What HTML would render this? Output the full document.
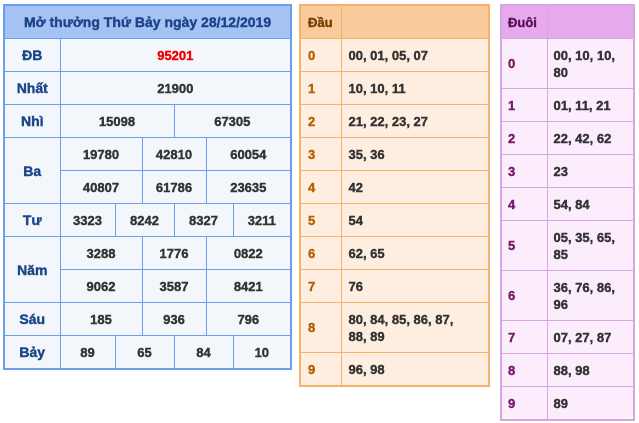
<!DOCTYPE html>
<html><head><meta charset="utf-8"><style>
body{margin:0;background:#fff;font-family:"Liberation Sans",Arial,sans-serif;font-weight:bold;font-size:13px;color:#333;}
table{border-collapse:collapse;table-layout:fixed;position:absolute;font-weight:bold;font-size:13px;}
td{padding:0;font-weight:bold;color:#333;-webkit-text-stroke:0.4px currentColor;}
#L{left:3px;top:4px;width:287px;border:2px solid #6d9eeb;}
#L td{border:1px solid #6d9eeb;background:#f3f6fb;text-align:center;height:32px;}
#L td.h{background:#a4c2f4;color:#1c4587;font-size:14px;}
#L td.l{color:#1c4587;font-size:14px;}
#L td.r{color:#e00;}
#M{left:299px;top:4px;width:191px;border:2px solid #f6b26b;}
#M td{border:1px solid #f6b26b;background:#fdeee0;height:32px;padding-left:7px;line-height:17px;}
#M td.h{background:#f9cb9c;color:#783f04;}
#M td.l{color:#b45f06;}
#R{left:500px;top:4px;width:135px;border:2px solid #d5a6e0;}
#R td{border:1px solid #d5a6e0;background:#fcedfc;height:32px;padding-left:6px;line-height:17px;}
#R td.h{background:#e6a9ec;color:#5b0f5b;}
#R td.l{color:#741b67;}
</style></head><body>
<table id="L">
<colgroup><col style="width:56px"><col style="width:55px"><col style="width:27px"><col style="width:32px"><col style="width:32px"><col style="width:27px"><col style="width:58px"></colgroup>
<tr><td class="h" colspan="7">Mở thưởng Thứ Bảy ngày 28/12/2019</td></tr>
<tr><td class="l">ĐB</td><td colspan="6" class="r">95201</td></tr>
<tr><td class="l">Nhất</td><td colspan="6">21900</td></tr>
<tr><td class="l">Nhì</td><td colspan="3">15098</td><td colspan="3">67305</td></tr>
<tr><td class="l" rowspan="2">Ba</td><td colspan="2">19780</td><td colspan="2">42810</td><td colspan="2">60054</td></tr>
<tr><td colspan="2">40807</td><td colspan="2">61786</td><td colspan="2">23635</td></tr>
<tr><td class="l">Tư</td><td>3323</td><td colspan="2">8242</td><td colspan="2">8327</td><td>3211</td></tr>
<tr><td class="l" rowspan="2">Năm</td><td colspan="2">3288</td><td colspan="2">1776</td><td colspan="2">0822</td></tr>
<tr><td colspan="2">9062</td><td colspan="2">3587</td><td colspan="2">8421</td></tr>
<tr><td class="l">Sáu</td><td colspan="2">185</td><td colspan="2">936</td><td colspan="2">796</td></tr>
<tr><td class="l">Bảy</td><td>89</td><td colspan="2">65</td><td colspan="2">84</td><td>10</td></tr>
</table>
<table id="M">
<colgroup><col style="width:41px"><col></colgroup>
<tr><td class="h">Đầu</td><td class="h"></td></tr>
<tr><td class="l">0</td><td>00, 01, 05, 07</td></tr>
<tr><td class="l">1</td><td>10, 10, 11</td></tr>
<tr><td class="l">2</td><td>21, 22, 23, 27</td></tr>
<tr><td class="l">3</td><td>35, 36</td></tr>
<tr><td class="l">4</td><td>42</td></tr>
<tr><td class="l">5</td><td>54</td></tr>
<tr><td class="l">6</td><td>62, 65</td></tr>
<tr><td class="l">7</td><td>76</td></tr>
<tr><td class="l" style="height:49px">8</td><td>80, 84, 85, 86, 87,<br>88, 89</td></tr>
<tr><td class="l">9</td><td>96, 98</td></tr>
</table>
<table id="R">
<colgroup><col style="width:46px"><col></colgroup>
<tr><td class="h">Đuôi</td><td class="h"></td></tr>
<tr><td class="l" style="height:49px">0</td><td>00, 10, 10,<br>80</td></tr>
<tr><td class="l">1</td><td>01, 11, 21</td></tr>
<tr><td class="l">2</td><td>22, 42, 62</td></tr>
<tr><td class="l">3</td><td>23</td></tr>
<tr><td class="l">4</td><td>54, 84</td></tr>
<tr><td class="l" style="height:49px">5</td><td>05, 35, 65,<br>85</td></tr>
<tr><td class="l" style="height:49px">6</td><td>36, 76, 86,<br>96</td></tr>
<tr><td class="l">7</td><td>07, 27, 87</td></tr>
<tr><td class="l">8</td><td>88, 98</td></tr>
<tr><td class="l">9</td><td>89</td></tr>
</table>
</body></html>
